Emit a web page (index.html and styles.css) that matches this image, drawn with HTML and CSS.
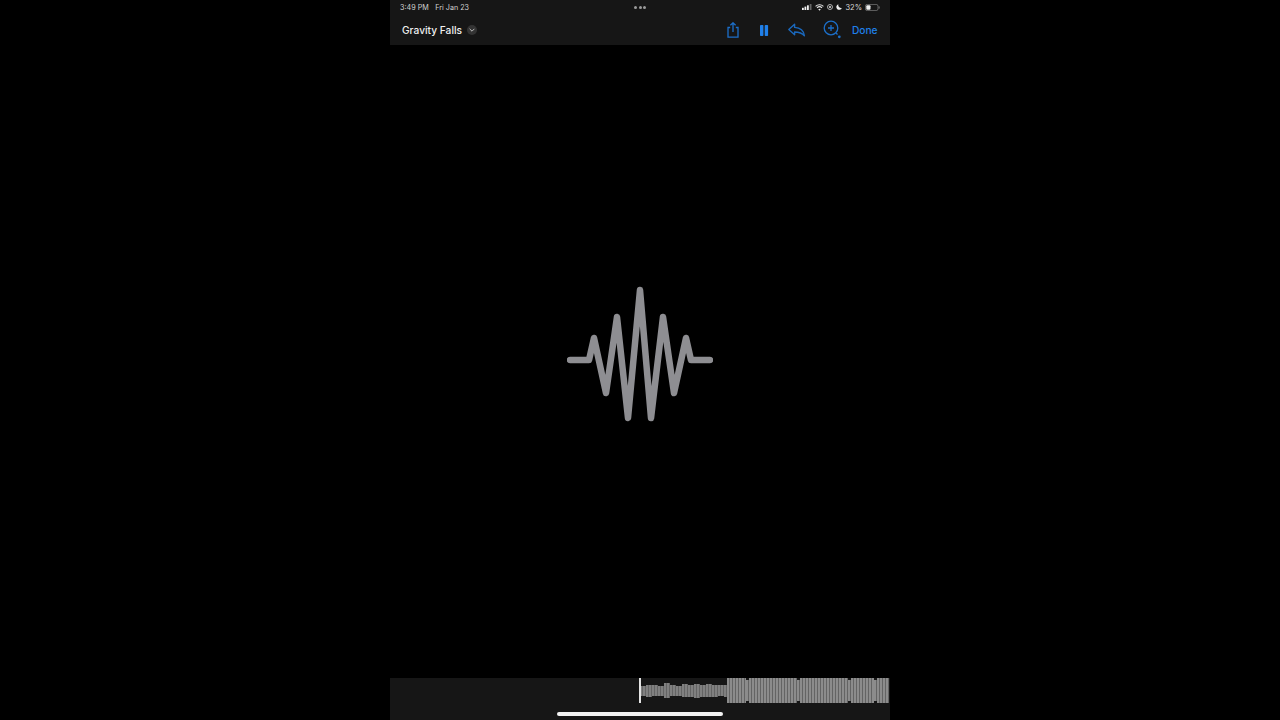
FILE: index.html
```html
<!DOCTYPE html>
<html lang="en">
<head>
<meta charset="utf-8">
<title>Gravity Falls</title>
<link rel="stylesheet" href="styles.css">
</head>
<body>
<div class="screen">
  <header class="top">
    <div class="status">
      <div class="status-left"><span>3:49 PM</span><span>Fri Jan 23</span></div>
      <div class="dots"><i></i><i></i><i></i></div>
      <div class="status-right">
        <svg width="10" height="6" viewBox="0 0 10 6"><rect x="0" y="3.800" width="1.800" height="2.200" fill="#f0f0f0"/><rect x="2.500" y="2.600" width="1.800" height="3.400" fill="#f0f0f0"/><rect x="5" y="1.300" width="1.800" height="4.700" fill="#f0f0f0"/><rect x="7.700" y="0" width="1.800" height="6" fill="#666"/></svg>
        <svg width="9" height="7" viewBox="0 0 9 7"><path d="M.6 2.400a5.600 5.600 0 0 1 7.800 0M2 3.900a3.600 3.600 0 0 1 5 0" fill="none" stroke="#e8e8e8" stroke-width="1.100"/><path d="M4.500 6.800 3.200 5.300a1.900 1.900 0 0 1 2.600 0z" fill="#e8e8e8"/></svg>
        <svg width="6" height="6" viewBox="0 0 7 7"><circle cx="3.500" cy="3.500" r="2.900" fill="none" stroke="#ddd" stroke-width=".9"/><circle cx="3.500" cy="3.500" r="1.200" fill="#ddd"/></svg>
        <svg width="6" height="6" viewBox="0 0 7 7"><path d="M2.800.3A3.300 3.300 0 1 0 6.800 4.600 3.400 3.400 0 0 1 2.800.3z" fill="#eee"/></svg>
        <span>32%</span>
        <svg width="15" height="7" viewBox="0 0 15 7"><rect x=".4" y=".4" width="12.600" height="6.200" rx="1.800" fill="none" stroke="#777" stroke-width=".8"/><rect x="1.300" y="1.300" width="4.200" height="4.400" rx="1" fill="#eee"/><rect x="13.600" y="2.400" width="1" height="2.200" fill="#777"/></svg>
      </div>
    </div>
    <div class="toolbar">
      <div class="title">
        <span>Gravity Falls</span>
        <span class="chev"><svg width="6" height="4" viewBox="0 0 6 4"><path d="M.6.8 3 3.200 5.400.8" fill="none" stroke="#c8c8c8" stroke-width=".9"/></svg></span>
      </div>
      <div class="actions">
        <div class="icons">
          <svg width="16" height="16" viewBox="0 0 16 16" fill="none" stroke="#1c6fc9" stroke-width="1.300"><path d="M5.200 5.500H3v9.700h10V5.500h-2.200"/><path d="M8 10V1M5.400 3.300 8 .8l2.600 2.500"/></svg>
          <svg width="16" height="11" viewBox="0 0 16 11" fill="#1f80ea"><rect x="4" y="0" width="3.400" height="11" rx=".8"/><rect x="8.700" y="0" width="3.400" height="11" rx=".8"/></svg>
          <svg width="20" height="14" viewBox="0 0 20 14" fill="none" stroke="#1a68bd" stroke-width="1.400" stroke-linejoin="round"><path d="M7.600 1.200 1.800 6.600l5.800 5.200V9c4.400 0 7.200.6 9.800 3.800-.6-4.800-3.600-8-9.800-8.400z"/></svg>
          <svg width="20" height="20" viewBox="0 0 20 20" fill="none" stroke="#1c6fc9" stroke-width="1.300"><circle cx="9" cy="8" r="6.800"/><path d="M9 5v6M6 8h6"/><path d="m14 13 1.500 1.500"/><circle cx="17.300" cy="16.800" r="1.400" fill="#1c6fc9" stroke="none"/></svg>
        </div>
        <span class="done">Done</span>
      </div>
    </div>
  </header>
  <main class="stage">
    <svg class="glyph" width="146" height="151" viewBox="567 286 146 151"><polyline points="570,360 589,360 594,338 606,393 617,317 628,418 640,290 651,418 663,317 674,393 686,338 691,360 710,360" fill="none" stroke="#8e8e92" stroke-width="6.500" stroke-linecap="round" stroke-linejoin="round"/></svg>
  </main>
  <footer class="bottom">
    <div class="wave">
      <b class="playhead"></b>
      <div class="low">
        <span class="h10"></span><span class="h12"></span><span class="h11"></span><span class="h10"></span><span class="h15"></span><span class="h11"></span><span class="h10"></span><span class="h13"></span><span class="h12"></span><span class="h14"></span><span class="h12"></span><span class="h13"></span><span class="h12"></span><span class="h11"></span><span class="h12 last"></span>
      </div>
      <div class="high">
        <span class="w19"></span><span class="notch"></span><span class="w48"></span><span class="notch"></span><span class="w48"></span><span class="notch"></span><span class="w23"></span><span class="notch"></span><span class="w12"></span>
      </div>
    </div>
    <div class="home"></div>
  </footer>
</div>
</body>
</html>
```
FILE: styles.css
```css
* { box-sizing: border-box; }
html, body { margin: 0; height: 100%; background: #000; }
body { display: flex; justify-content: center; font-family: Inter, "Liberation Sans", sans-serif; overflow: hidden; }
.screen { width: 500px; height: 720px; display: flex; flex-direction: column; }
.top { background: #161616; height: 45px; flex: none; display: flex; flex-direction: column; }
.status { height: 14px; padding: 0 10px; display: grid; grid-template-columns: 1fr auto 1fr; align-items: center; font-size: 7.200px; color: #d0d0d0; }
.status-left { display: flex; gap: 6.500px; }
.dots { display: flex; gap: 1.500px; }
.dots i { width: 3px; height: 3px; border-radius: 50%; background: #9a9a9a; }
.status-right { display: flex; justify-content: flex-end; align-items: center; gap: 3px; color: #d8d8d8; font-size: 7.500px; }
.toolbar { flex: 1; display: flex; align-items: center; justify-content: space-between; padding: 1px 12.500px 0 12px; }
.title { display: flex; align-items: center; gap: 5px; color: #f0f0f0; font-size: 10.200px; font-weight: 500; }
.chev { width: 10px; height: 10px; border-radius: 50%; background: #333; display: flex; align-items: center; justify-content: center; }
.actions { display: flex; align-items: center; gap: 10px; }
.icons { display: flex; align-items: center; gap: 15px; }
.done { color: #1f80ea; font-size: 10.200px; font-weight: 500; }
.stage { flex: 1; display: flex; align-items: center; justify-content: center; }
.bottom { height: 42px; flex: none; background: #161616; display: flex; flex-direction: column; align-items: center; }
.wave { width: 500px; height: 25px; padding-left: 250px; display: flex; align-items: center; position: relative; }
.playhead { position: absolute; left: 249px; top: 0; width: 2px; height: 25px; background: #e4e4e4; }
.low { width: 87px; height: 25px; display: flex; align-items: center; }
.low span { flex: none; width: 6px; background: repeating-linear-gradient(90deg, #808080 0 2px, #646464 2px 3px); }
.low .last { width: 3px; }
.h10 { height: 10px; } .h11 { height: 11px; } .h12 { height: 12px; } .h13 { height: 13px; } .h14 { height: 14px; } .h15 { height: 15px; }
.high { width: 162px; height: 25px; display: flex; align-items: center; }
.high span { height: 25px; background: repeating-linear-gradient(90deg, #8c8c8c 0 2px, #646464 2px 3px); }
.high .notch { width: 3px; height: 21px; }
.w12 { width: 12px; } .w19 { width: 19px; } .w23 { width: 23px; } .w48 { width: 48px; }
.home { width: 166px; height: 3.500px; margin-top: 9px; border-radius: 2px; background: #f2f2f2; }
```
